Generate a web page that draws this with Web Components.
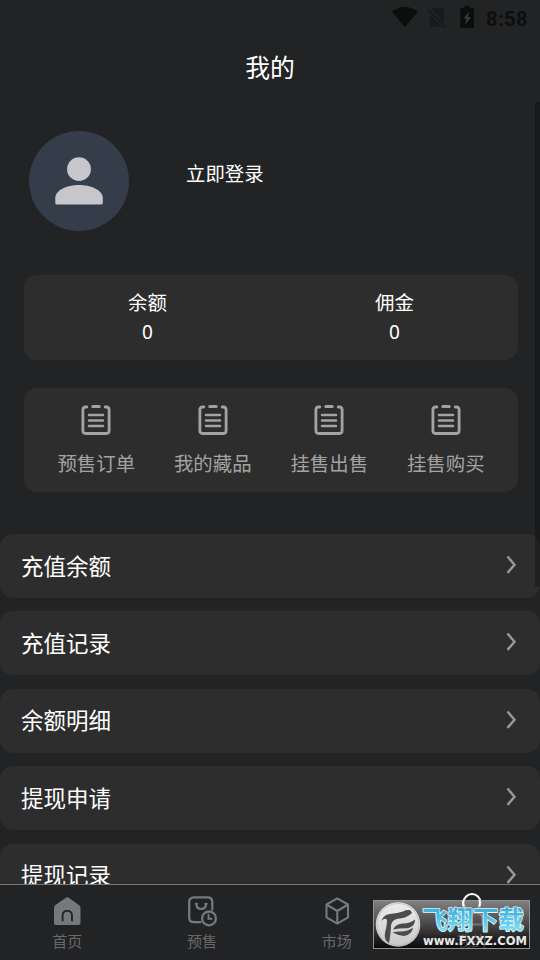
<!DOCTYPE html>
<html lang="zh-CN">
<head>
<meta charset="utf-8">
<title>我的</title>
<style>
html,body{margin:0;background:#222325}
body{width:540px;height:960px;overflow:hidden;font-family:"Noto Sans CJK SC",sans-serif;color:#fff}
</style>
</head>
<body>
<my-page></my-page>
<script>
function define(name, html, fill) {
  customElements.define(name, class extends HTMLElement {
    constructor() {
      super();
      this.attachShadow({mode: 'open'});
    }
    connectedCallback() {
      const t = document.createElement('template');
      t.innerHTML = fill ? fill(this) + html : html;
      this.shadowRoot.replaceChildren(t.content.cloneNode(true));
    }
  });
}

const icons = {
  clipboard: `<svg width="30" height="32" viewBox="0 0 30 32" fill="none" stroke="#a3a3a3" stroke-width="2.8" stroke-linecap="round"><path d="M5.8 3H4.5Q1.9 3 1.9 5.6V26.8Q1.9 29.5 4.5 29.5H25.5Q28.1 29.5 28.1 26.8V5.6Q28.1 3 25.5 3H24.2"/><path d="M11.8 2.5H18.2" stroke-width="3"/><path d="M8 11.1H22M8 16.5H22M8 22.1H22" stroke-width="2.5"/></svg>`,
  home: `<svg width="30" height="32" viewBox="0 0 30 32"><path d="M15.3 1.2Q16.1 1.2 17.1 2L26.9 9.1Q28.5 10.2 28.5 12V27Q28.5 29 26.5 29H4Q2 29 2 27V12Q2 10.2 3.4 9.1L13.5 2Q14.5 1.2 15.3 1.2Z" fill="#777879"/><path d="M10.6 25.2V19.8Q10.6 14.9 15.3 14.9Q20 14.9 20 19.8V25.2" fill="none" stroke="#222325" stroke-width="1.9"/></svg>`,
  presale: `<svg width="30" height="32" viewBox="0 0 30 32" fill="none" stroke="#777879" stroke-width="2.3" stroke-linecap="round"><path d="M13.5 26.2H7Q2.2 26.2 2.2 21.5V6Q2.2 1.3 7 1.3H20.5Q25.3 1.3 25.3 6V13.5"/><path d="M9.4 7.8Q9.4 13 14.2 13Q19 13 19 7.8" stroke-width="2.2"/><path d="M8.4 7.8H10.4M18 7.8H20" stroke-width="1.6"/><circle cx="22" cy="22.4" r="6.9" fill="#222325"/><path d="M21.5 18.7V22.8H24.6" stroke-width="1.9"/></svg>`,
  market: `<svg width="30" height="32" viewBox="0 0 30 32" fill="none" stroke="#777879" stroke-width="2.1" stroke-linejoin="round"><path d="M15.3 2.3L26 8.5V21.3L15.3 27.7L4.5 21.3V8.5ZM4.5 8.5L15.3 15L26 8.5M15.3 15V27.5"/></svg>`,
  user: `<svg width="30" height="32" viewBox="0 0 30 32" fill="none" stroke="#fff" stroke-width="2"><circle cx="15" cy="6.5" r="8.4"/><path d="M4.5 28.5V23Q4.5 17 10.5 17H19.5Q25.5 17 25.5 23V28.5Z"/></svg>`
};

define('status-bar', `<style>
:host{display:flex;height:36px;justify-content:flex-end;align-items:center;box-sizing:border-box;padding-right:12px}
svg{display:block;margin-right:-1px}
b{font:700 20px/36px Roboto,sans-serif;letter-spacing:.5px;color:#0d0e0e;padding:2px 0 0 11px}
</style>
<svg width="84" height="36" viewBox="0 0 84 36"><path d="M0 11.5Q13 2.5 26 11.5L13 27.2Z" fill="#0c0d0d"/><path d="M37.5 13.5V25.2Q37.5 26.8 39 26.8H50.5L37.5 14ZM40 9.8L41.5 8.1H50.5Q52 8.1 52 9.6V22.2Z" fill="#18191a"/><path d="M36 9.5L54.2 27.5" stroke="#18191a" stroke-width="1.7"/><path d="M68.3 8H72.3V6H78V8H82V28H68.3Z" fill="#0c0d0d"/><path d="M77 11.5L71.6 18.5H74.5L73 25L79 17H75.8Z" fill="#3b3c3d"/></svg><b>8:58</b>`);

define('nav-title', `<style>:host{display:block;height:63px;text-align:center;font-size:24.8px;line-height:61px}</style><slot></slot>`);

define('profile-head', `<style>
:host{display:flex;height:176px;padding:32px 0 0 29px;box-sizing:border-box;gap:57px;font-size:19.4px;line-height:28px}
.avatar{width:100px;height:100px;border-radius:50%;background:#353c4a}
.name{padding-top:28px}
</style>
<div class="avatar"><svg width="100" height="100" viewBox="0 0 100 100" fill="#c8c6cd"><circle cx="50" cy="38.2" r="11.9"/><path d="M26.3 72V67.2C26.3 58.3 39.5 54 50 54S73.8 58.3 73.8 67.2V72Q73.8 73.6 72.2 73.6H27.9Q26.3 73.6 26.3 72Z"/></svg></div>
<div class="name"><slot></slot></div>`);

define('panel-card', `<style>
:host{display:flex;margin:0 22px 0 24px;background:#2d2d2d;border-radius:13px;box-sizing:border-box}
:host([kind=balance]){height:85px;margin-bottom:28px}
:host([kind=orders]){height:104px;padding:0 14px;margin-bottom:42px}
::slotted(*){flex:1}
</style><slot></slot>`);

define('balance-item', `<style>
:host{display:block;text-align:center;font-size:19.4px;line-height:28px;padding-top:13px}
.n{font-family:"Noto Sans",sans-serif;font-size:19px;line-height:28px;margin-top:2px}
</style><div><slot></slot></div><div class="n">0</div>`);

define('order-item', `<style>
:host{display:flex;flex-direction:column;align-items:center;padding-top:16px;box-sizing:border-box;font-size:19.4px;line-height:28px;color:#a3a3a3}
svg{display:block;margin-bottom:13px}
</style>${icons.clipboard}<span><slot></slot></span>`);

define('menu-row', `<style>
:host{display:flex;flex:none;height:64px;background:#2d2d2d;border-radius:13px;align-items:center;justify-content:space-between;padding:0 23px 0 21px;box-sizing:border-box;font-size:22.5px;line-height:60px}
span{padding-bottom:3px}
svg{display:block;margin-bottom:3px}
</style><span><slot></slot></span>
<svg width="11" height="19" viewBox="0 0 11 19" fill="none" stroke="#999" stroke-width="2.4"><path d="M1.5 1.5L8.5 9.7L1.5 17.9"/></svg>`);

define('menu-list', `<style>:host{display:flex;flex-direction:column;gap:13.4px}</style><slot></slot>`);

define('scroll-thumb', `<style>:host{position:absolute;right:0;top:102px;width:5px;height:485px;background:rgba(0,0,0,.28)}</style>`);

define('tab-item', `<style>
:host{display:flex;flex:1;flex-direction:column;align-items:center;padding-top:11px;font-size:15px;line-height:22px;color:#68696a}
:host([active]){color:#fff}
svg{display:block;margin-bottom:2px;overflow:visible}
</style><span><slot></slot></span>`, el => icons[el.getAttribute('icon')]);

define('tab-bar', `<style>:host{display:flex;height:76px;box-sizing:border-box;border-top:1px solid #77787a;background:#222325;padding-right:1px}</style><slot></slot>`);

define('site-badge', `<style>
:host{position:absolute;left:373px;top:900px;width:157px;height:49px}
svg{display:block}
</style>
<svg width="157" height="49" viewBox="0 0 157 49">
<defs><linearGradient id="bg" x2="0" y2="1"><stop stop-color="#999" stop-opacity=".8"/><stop offset=".5" stop-color="#505050" stop-opacity=".8"/><stop offset="1" stop-color="#000" stop-opacity=".76"/></linearGradient>
<linearGradient id="disc" x2="0" y2="1"><stop stop-color="#eee"/><stop offset="1" stop-color="#c8c8c8"/></linearGradient>
<linearGradient id="blue" gradientUnits="userSpaceOnUse" x1="0" x2="0" y1="6" y2="33"><stop stop-color="#35a9da"/><stop offset=".55" stop-color="#5bc8ea"/><stop offset="1" stop-color="#8be6f5"/></linearGradient></defs>
<rect x=".5" y=".5" width="156" height="48" fill="url(#bg)" stroke="#929292"/>
<circle cx="25" cy="24.5" r="22.3" fill="url(#disc)"/>
<circle cx="25" cy="24.5" r="21" fill="none" stroke="#aaa" stroke-width=".6"/>
<path d="M8.5 21Q10 15 17 14Q25 13 30 11.5Q33 9.8 37.5 10.2L39 13Q35 17 29 18.2Q19 18.5 18 25Q18 32 16 43Q10.5 40 12 33Q14 25 14 20Q12 17 8.5 21Z" fill="#4b4b4b"/>
<path d="M20 29.5Q23 23.5 30 23.5Q37 23.5 42 19.5Q42.5 26 35 28.2Q27 28 20 29.5ZM19.5 32.5Q24 31 29 31.5Q36 31 40 27.5Q39 34.5 31 36Q24 35 19.5 32.5Z" fill="#4b4b4b"/>
<path d="M90.8 6.5A8.4 8.4 0 1 1 106.2 6.5" fill="none" stroke="#fff" stroke-width="2"/>
<text x="49" y="29" textLength="102" lengthAdjust="spacingAndGlyphs" font-family="Noto Sans CJK SC" font-size="25.5" font-weight="700" fill="url(#blue)" stroke="#e4f7fc" stroke-width="1.6" stroke-linejoin="round" paint-order="stroke">飞翔下载</text>
<text x="50" y="45" textLength="104" lengthAdjust="spacingAndGlyphs" font-family="DejaVu Sans" font-size="11.5" font-weight="700" fill="#e8e8e8">www.FXXZ.COM</text>
</svg>`);

define('my-page', `<style>
:host{display:flex;flex-direction:column;height:960px;width:540px;position:relative;overflow:hidden}
main{height:884px;overflow:hidden}
</style>
<main>
<status-bar></status-bar>
<nav-title>我的</nav-title>
<profile-head>立即登录</profile-head>
<panel-card kind="balance"><balance-item>余额</balance-item><balance-item>佣金</balance-item></panel-card>
<panel-card kind="orders"><order-item>预售订单</order-item><order-item>我的藏品</order-item><order-item>挂售出售</order-item><order-item>挂售购买</order-item></panel-card>
<menu-list><menu-row>充值余额</menu-row><menu-row>充值记录</menu-row><menu-row>余额明细</menu-row><menu-row>提现申请</menu-row><menu-row>提现记录</menu-row></menu-list>
</main>
<tab-bar><tab-item icon="home">首页</tab-item><tab-item icon="presale">预售</tab-item><tab-item icon="market">市场</tab-item><tab-item icon="user" active>我的</tab-item></tab-bar>
<scroll-thumb></scroll-thumb>
<site-badge></site-badge>`);
</script>
</body>
</html>
